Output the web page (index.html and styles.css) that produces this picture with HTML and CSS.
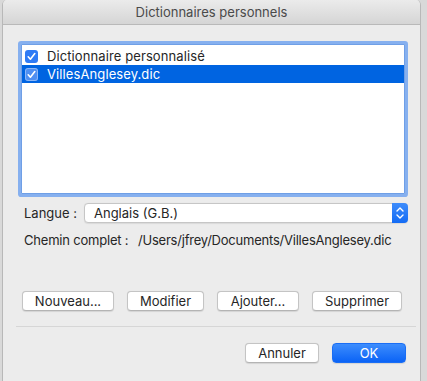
FILE: index.html
```html
<!DOCTYPE html>
<html lang="fr">
<head>
<meta charset="utf-8">
<title>Dictionnaires personnels</title>
<link rel="stylesheet" href="styles.css">
</head>
<body>
<div class="window">
  <div class="titlebar">Dictionnaires personnels</div>
  <div class="content">
    <div class="list">
      <div class="row">
        <span class="check"><svg viewBox="0 0 13 13" width="13" height="13"><path d="M3.2 6.8 L5.4 9.2 L9.8 3.6" fill="none" stroke="#fff" stroke-width="1.6" stroke-linecap="round" stroke-linejoin="round"/></svg></span>
        <span class="label">Dictionnaire personnalisé</span>
      </div>
      <div class="row selected">
        <span class="check"><svg viewBox="0 0 13 13" width="13" height="13"><path d="M3.2 6.8 L5.4 9.2 L9.8 3.6" fill="none" stroke="#fff" stroke-width="1.6" stroke-linecap="round" stroke-linejoin="round"/></svg></span>
        <span class="label">VillesAnglesey.dic</span>
      </div>
    </div>

    <div class="field-row lang-row">
      <span class="field-label">Langue :</span>
      <div class="popup">
        <span class="popup-text">Anglais (G.B.)</span>
        <span class="stepper"><svg viewBox="0 0 16 20" width="16" height="20"><path d="M5 8 L8 5 L11 8 M5 12 L8 15 L11 12" fill="none" stroke="#fff" stroke-width="1.4" stroke-linecap="round" stroke-linejoin="round"/></svg></span>
      </div>
    </div>

    <div class="field-row path-row">
      <span class="field-label">Chemin complet :</span>
      <span class="path">/Users/jfrey/Documents/VillesAnglesey.dic</span>
    </div>

    <div class="actions">
      <button class="btn w-nouveau">Nouveau...</button>
      <button class="btn w-modifier">Modifier</button>
      <button class="btn w-ajouter">Ajouter...</button>
      <button class="btn w-supprimer">Supprimer</button>
    </div>

    <div class="separator"></div>

    <div class="footer">
      <button class="btn w-annuler">Annuler</button>
      <button class="btn primary w-ok">OK</button>
    </div>
  </div>
</div>
</body>
</html>
```

FILE: styles.css
```css
html, body {
  margin: 0;
  padding: 0;
}
body {
  width: 427px;
  height: 381px;
  overflow: hidden;
  background: #d9d9d9;
  font-family: Inter, "Liberation Sans", Arial, sans-serif;
  font-size: 13px;
  color: #262626;
}
.window {
  margin-left: 2px;
  width: 417px;
  height: 381px;
  background: #ececec;
  border-left: 1px solid #b8b8b8;
  border-right: 1px solid #b8b8b8;
  border-radius: 5px 5px 0 0;
  overflow: hidden;
}
.titlebar {
  height: 24px;
  line-height: 25px;
  text-align: center;
  color: #4a4a4a;
  font-size: 13px;
  background: linear-gradient(#ebebeb, #d5d5d5);
  border-bottom: 1px solid #b9b9b9;
}
.content {
  padding: 19px 0 0 18px;
}
.list {
  width: 382px;
  height: 146px;
  padding-top: 2px;
  background: #fff;
  border: 1px solid #6f9fe6;
  box-shadow: 0 0 0 3px #86b0ef;
  border-radius: 1px;
}
.row {
  height: 18px;
  display: flex;
  align-items: center;
  padding-left: 3px;
  gap: 9px;
}
.row.selected {
  background: #0064e1;
  color: #fff;
}
.check {
  width: 13px;
  height: 13px;
  border-radius: 3px;
  background: #2f7bf5;
  display: flex;
}
.row.selected .check {
  background: #4f8ff2;
  box-shadow: inset 0 0 0 1px rgba(255,255,255,0.35);
}
.label {
  line-height: 18px;
  letter-spacing: 0.1px;
}
.field-row {
  display: flex;
  align-items: center;
  padding-left: 3px;
}
.lang-row {
  margin-top: 9px;
  height: 20px;
}
.field-label {
  color: #262626;
  white-space: nowrap;
}
.lang-row .field-label {
  width: 60px;
}
.popup {
  width: 322px;
  height: 18px;
  background: #fff;
  border: 1px solid #c6c6c6;
  border-radius: 4px;
  display: flex;
  align-items: center;
  justify-content: space-between;
  box-shadow: 0 0.5px 1px rgba(0,0,0,0.08);
}
.popup-text {
  padding-left: 9px;
}
.stepper {
  width: 16px;
  height: 20px;
  margin: -1px -1px -1px 0;
  background: linear-gradient(#3e8cfb, #146cf5);
  border-radius: 0 4px 4px 0;
  display: flex;
}
.path-row {
  margin-top: 9px;
  height: 16px;
}
.path-row .field-label {
  width: 114px;
  flex: none;
  letter-spacing: -0.2px;
}
.path {
  white-space: nowrap;
  letter-spacing: -0.22px;
}
.actions {
  display: flex;
  gap: 13px;
  margin-top: 43px;
  padding-left: 1px;
}
.btn {
  box-sizing: border-box;
  font-family: Inter, "Liberation Sans", Arial, sans-serif;
  font-size: 13px;
  color: #262626;
  height: 20px;
  padding: 0;
  background: #fff;
  border: 1px solid #c4c4c4;
  border-bottom-color: #b4b4b4;
  border-radius: 4px;
  box-shadow: 0 0.5px 1px rgba(0,0,0,0.1);
}
.w-nouveau { width: 92px; }
.w-modifier { width: 77px; }
.w-ajouter { width: 82px; }
.w-supprimer { width: 90px; }
.w-annuler { width: 74px; }
.w-ok { width: 74px; }
.separator {
  margin: 15px 0 0 -5px;
  width: 400px;
  height: 1px;
  background: #d6d6d6;
}
.footer {
  display: flex;
  justify-content: flex-end;
  gap: 13px;
  margin-top: 16px;
  width: 385px;
}
.btn.primary {
  color: #fff;
  background: linear-gradient(#3d8dfd, #0b63f6);
  border-color: #1a6ef5;
}
```
